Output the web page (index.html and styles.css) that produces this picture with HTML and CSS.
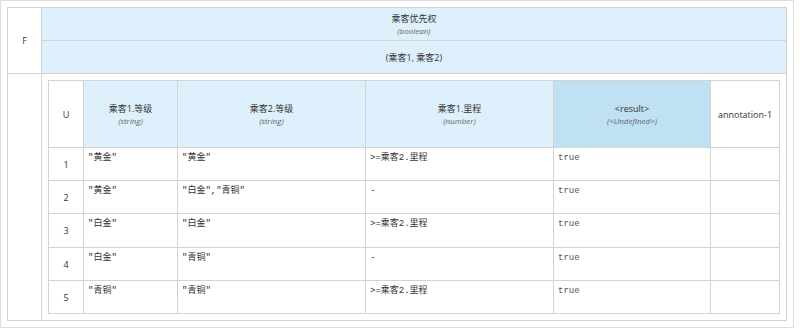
FILE: index.html
```html
<!DOCTYPE html>
<html lang="zh">
<head>
<meta charset="utf-8">
<title>乘客优先权</title>
<link rel="stylesheet" href="styles.css">
</head>
<body>
<div class="frame">
  <table class="outer">
    <tr class="orow">
      <td class="fcell" rowspan="2">F</td>
      <th class="head">
        <div class="title">乘客优先权</div>
        <div class="sub">(boolean)</div>
      </th>
    </tr>
    <tr class="orow">
      <td class="head params">(乘客1, 乘客2)</td>
    </tr>
    <tr>
      <td class="fcell blank"></td>
      <td class="nest">
        <table class="inner">
          <tr class="hrow">
            <th class="cu">U</th>
            <th class="hin c1"><div class="title">乘客1.等级</div><div class="sub">(string)</div></th>
            <th class="hin c2"><div class="title">乘客2.等级</div><div class="sub">(string)</div></th>
            <th class="hin c3"><div class="title">乘客1.里程</div><div class="sub">(number)</div></th>
            <th class="hout c4"><div class="title">&lt;result&gt;</div><div class="sub">(&lt;Undefined&gt;)</div></th>
            <th class="cann">annotation-1</th>
          </tr>
          <tr class="drow">
            <td class="num">1</td>
            <td class="val">"黄金"</td>
            <td class="val">"黄金"</td>
            <td class="val">&gt;=乘客2.里程</td>
            <td class="val out">true</td>
            <td class="val"></td>
          </tr>
          <tr class="drow">
            <td class="num">2</td>
            <td class="val">"黄金"</td>
            <td class="val">"白金","青铜"</td>
            <td class="val">-</td>
            <td class="val out">true</td>
            <td class="val"></td>
          </tr>
          <tr class="drow tall">
            <td class="num">3</td>
            <td class="val">"白金"</td>
            <td class="val">"白金"</td>
            <td class="val">&gt;=乘客2.里程</td>
            <td class="val out">true</td>
            <td class="val"></td>
          </tr>
          <tr class="drow">
            <td class="num">4</td>
            <td class="val">"白金"</td>
            <td class="val">"青铜"</td>
            <td class="val">-</td>
            <td class="val out">true</td>
            <td class="val"></td>
          </tr>
          <tr class="drow">
            <td class="num">5</td>
            <td class="val">"青铜"</td>
            <td class="val">"青铜"</td>
            <td class="val">&gt;=乘客2.里程</td>
            <td class="val out">true</td>
            <td class="val"></td>
          </tr>
        </table>
      </td>
    </tr>
  </table>
</div>
</body>
</html>
```
FILE: styles.css
```css
html, body {
  margin: 0;
  padding: 0;
  background: #ffffff;
}
body {
  font-family: "Open Sans", "Noto Sans CJK SC", sans-serif;
  font-size: 9px;
  color: #333333;
}
.frame {
  width: 794px;
  height: 328px;
  box-sizing: border-box;
  border: 1px solid #dddddd;
  padding: 6px;
}
table {
  border-collapse: separate;
  border-spacing: 0;
  table-layout: fixed;
}
td, th {
  box-sizing: border-box;
  padding: 0;
  font-weight: normal;
}
.outer {
  width: 780px;
  height: 314px;
  border-left: 1px solid #d3d3d3;
  border-top: 1px solid #d3d3d3;
}
.outer > tbody > tr > td,
.outer > tbody > tr > th {
  border-right: 1px solid #d3d3d3;
  border-bottom: 1px solid #d3d3d3;
}
.orow {
  height: 33px;
}
.fcell {
  width: 34px;
  text-align: center;
  vertical-align: middle;
}
.head {
  background: #def0fc;
  text-align: center;
  vertical-align: middle;
}
.title {
  line-height: 12px;
}
.sub {
  font-style: italic;
  font-size: 8px;
  line-height: 11px;
  color: #666666;
}
.nest {
  padding: 6px;
  vertical-align: top;
}
.inner {
  width: 732px;
  height: 234px;
  border-left: 1px solid #d3d3d3;
  border-top: 1px solid #d3d3d3;
}
.inner td, .inner th {
  border-right: 1px solid #d3d3d3;
  border-bottom: 1px solid #d3d3d3;
}
.hrow {
  height: 67px;
}
.drow {
  height: 33px;
}
.drow.tall {
  height: 34px;
}
.cu {
  width: 35px;
  text-align: center;
  vertical-align: middle;
}
.c1 { width: 94px; }
.c2 { width: 188px; }
.c3 { width: 188px; }
.c4 { width: 157px; }
.cann {
  width: 69px;
  text-align: center;
  vertical-align: middle;
}
.hin {
  background: #def0fc;
  text-align: center;
  vertical-align: middle;
}
.hout {
  background: #bfe1f3;
  text-align: center;
  vertical-align: middle;
}
.num {
  text-align: center;
  vertical-align: middle;
}
.val {
  vertical-align: top;
  text-align: left;
  padding: 4px 4px 0 4px;
  line-height: 13px;
  font-family: "Liberation Mono", "Noto Sans CJK SC", monospace;
  font-size: 9px;
  color: #333333;
}
.val.out {
  color: #555555;
}
```
